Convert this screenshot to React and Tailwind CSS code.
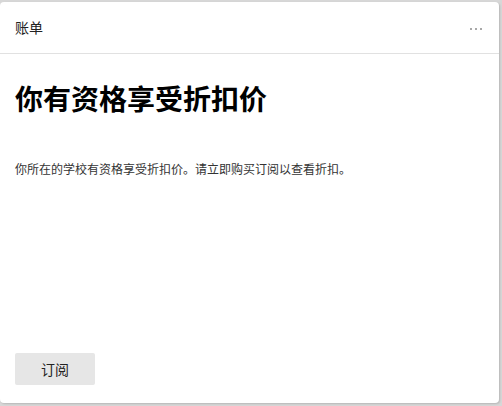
export default function App() {
  return (
    <div
      className="w-[502px] h-[406px] bg-[#d7d7d7] pt-[2px]"
      style={{ fontFamily: '"Noto Sans CJK SC", "Noto Sans", sans-serif' }}
    >
      <div className="w-[499px] h-[401px] bg-white rounded-[4px] shadow-[1px_1px_2px_rgba(0,0,0,0.15)] flex flex-col">
        <div className="h-[52px] pl-[15px] pr-[17px] flex items-center justify-between border-b border-[#e1e1e1]">
          <span className="text-[14px] text-[#222]">账单</span>
          <span className="flex items-center gap-[3px] mt-[2px]">
            <span className="w-[2px] h-[2px] bg-[#a8a8a8]" />
            <span className="w-[2px] h-[2px] bg-[#a8a8a8]" />
            <span className="w-[2px] h-[2px] bg-[#a8a8a8]" />
          </span>
        </div>
        <div className="px-[15px] pt-[26px] flex flex-col flex-1">
          <h1 className="text-[28px] leading-[36px] font-bold text-black">你有资格享受折扣价</h1>
          <p className="mt-[44px] text-[12px] leading-[18px] text-[#333]">
            你所在的学校有资格享受折扣价。请立即购买订阅以查看折扣。
          </p>
          <div className="flex-1" />
          <div className="pb-[18px]">
            <button className="w-[80px] h-[32px] bg-[#e6e6e6] rounded-[2px] text-[14px] text-[#222] flex items-center justify-center">
              订阅
            </button>
          </div>
        </div>
      </div>
    </div>
  );
}
